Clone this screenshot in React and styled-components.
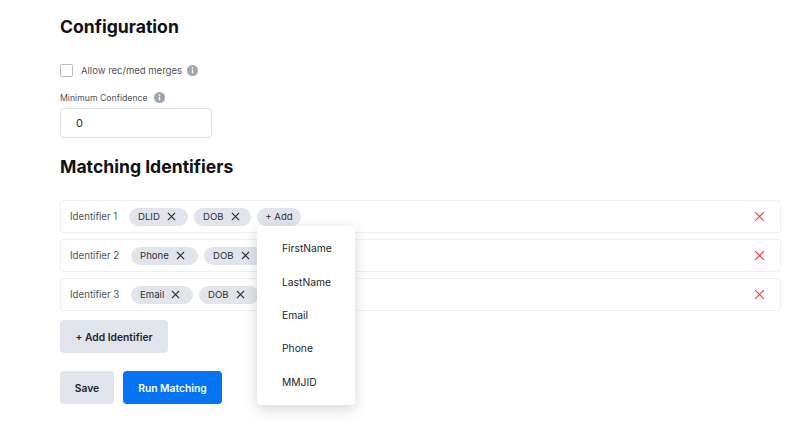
import React from "react";
import styled, { createGlobalStyle } from "styled-components";

const Global = createGlobalStyle`
  html, body { margin: 0; padding: 0; background: #fff; }
  body { font-family: Inter, "Liberation Sans", sans-serif; color: #1a1c20; overflow: hidden; }
  * { box-sizing: border-box; }
`;

const Page = styled.div`
  width: 810px;
  height: 440px;
  padding: 16px 29px 0 60px;
  display: flex;
  flex-direction: column;
`;

const Title = styled.h2`
  margin: 0;
  font-size: 17.6px;
  line-height: 22px;
  font-weight: 700;
  color: #101216;
`;

const CheckRow = styled.label`
  margin-top: 21px;
  height: 22px;
  display: flex;
  align-items: center;
`;

const CheckBox = styled.span`
  width: 13px;
  height: 13px;
  border: 1px solid #b9bbc0;
  border-radius: 2px;
  background: #fff;
`;

const CheckText = styled.span`
  margin-left: 8px;
  font-size: 9.5px;
  color: #50545b;
`;

const InfoWrap = styled.span`
  display: inline-flex;
  margin-left: ${(p) => p.$gap}px;
`;

const FieldLabel = styled.div`
  margin-top: 8px;
  height: 17px;
  display: flex;
  align-items: center;
  font-size: 8.7px;
  color: #50545b;
`;

const NumberBox = styled.div`
  margin-top: 2px;
  width: 152px;
  height: 30px;
  border: 1px solid #dcdde1;
  border-radius: 4px;
  padding-left: 15px;
  display: flex;
  align-items: center;
  font-size: 11px;
  color: #2a2c31;
`;

const SectionTitle = styled(Title)`
  margin-top: 18px;
`;

const Rows = styled.div`
  margin-top: 22px;
  display: flex;
  flex-direction: column;
  gap: 6px;
`;

const Row = styled.div`
  height: 33px;
  border: 1px solid #eeeef1;
  border-radius: 3px;
  padding: 0 15px 0 9px;
  display: flex;
  align-items: center;
  background: #fff;
`;

const RowLabel = styled.span`
  font-size: 9.7px;
  color: #50545b;
  width: ${(p) => p.$w}px;
`;

const Chips = styled.div`
  flex: 1;
  display: flex;
  align-items: center;
  gap: ${(p) => p.$gap}px;
`;

const Chip = styled.span`
  height: 18px;
  border-radius: 9px;
  background: #e1e4ea;
  width: ${(p) => p.$w}px;
  padding-left: 9px;
  display: flex;
  align-items: center;
  gap: 7px;
  font-size: 9.6px;
  color: #2e3138;
`;

const AddWrap = styled.span`
  position: relative;
  display: flex;
`;

const AddChip = styled(Chip)`
  justify-content: center;
  padding: 0;
`;

const Menu = styled.div`
  position: absolute;
  top: 18px;
  left: 0;
  width: 98px;
  height: 179px;
  z-index: 2;
  background: #fff;
  border-radius: 4px;
  box-shadow: 0 4px 14px rgba(40, 44, 60, 0.2);
  padding: 6px 0;
  display: flex;
  flex-direction: column;
`;

const MenuItem = styled.div`
  height: 33.4px;
  padding-left: 25px;
  display: flex;
  align-items: center;
  font-size: 10.3px;
  color: #24262b;
`;

const Button = styled.div`
  height: 33px;
  width: ${(p) => p.$w}px;
  border-radius: 4px;
  display: flex;
  align-items: center;
  justify-content: center;
  font-size: 10.3px;
  font-weight: 600;
  background: ${(p) => (p.$primary ? "#0474f2" : "#e1e4ea")};
  color: ${(p) => (p.$primary ? "#fff" : "#23262c")};
`;

const AddIdentifier = styled(Button)`
  margin-top: 9px;
`;

const Actions = styled.div`
  margin-top: 18px;
  display: flex;
  gap: 9px;
`;

const Info = ({ size = 11 }) => (
  <svg width={size} height={size} viewBox="0 0 12 12">
    <circle cx="6" cy="6" r="6" fill="#a0a3ac" />
    <rect x="5.2" y="5.2" width="1.6" height="3.8" fill="#fff" />
    <circle cx="6" cy="3.4" r="0.95" fill="#fff" />
  </svg>
);

const Cross = ({ size = 9, color = "#2e3138", w = 1.4 }) => (
  <svg width={size} height={size} viewBox="0 0 10 10" fill="none" stroke={color} strokeWidth={w}>
    <path d="M1 1 L9 9 M9 1 L1 9" />
  </svg>
);

const rows = [
  { label: "Identifier 1", w: 59, gap: 6, chips: [["DLID", 59], ["DOB", 57]], add: true },
  { label: "Identifier 2", w: 61, gap: 6, chips: [["Phone", 67], ["DOB", 60]] },
  { label: "Identifier 3", w: 61, gap: 6, chips: [["Email", 62], ["DOB", 60]] },
];

const items = ["FirstName", "LastName", "Email", "Phone", "MMJID"];

export default function App() {
  return (
    <Page>
      <Global />
      <Title>Configuration</Title>
      <CheckRow>
        <CheckBox />
        <CheckText>Allow rec/med merges</CheckText>
        <InfoWrap $gap={5}><Info /></InfoWrap>
      </CheckRow>
      <FieldLabel>
        Minimum Confidence
        <InfoWrap $gap={6}><Info /></InfoWrap>
      </FieldLabel>
      <NumberBox>0</NumberBox>
      <SectionTitle>Matching Identifiers</SectionTitle>
      <Rows>
        {rows.map((r) => (
          <Row key={r.label}>
            <RowLabel $w={r.w}>{r.label}</RowLabel>
            <Chips $gap={r.gap}>
              {r.chips.map(([t, w]) => (
                <Chip key={t} $w={w}>{t}<Cross /></Chip>
              ))}
              {r.add && (
                <AddWrap>
                  <AddChip $w={44}>+ Add</AddChip>
                  <Menu>
                    {items.map((i) => <MenuItem key={i}>{i}</MenuItem>)}
                  </Menu>
                </AddWrap>
              )}
            </Chips>
            <Cross size={11} color="#fb3845" w={1.1} />
          </Row>
        ))}
      </Rows>
      <AddIdentifier $w={108}>+ Add Identifier</AddIdentifier>
      <Actions>
        <Button $w={54}>Save</Button>
        <Button $w={99} $primary>Run Matching</Button>
      </Actions>
    </Page>
  );
}
